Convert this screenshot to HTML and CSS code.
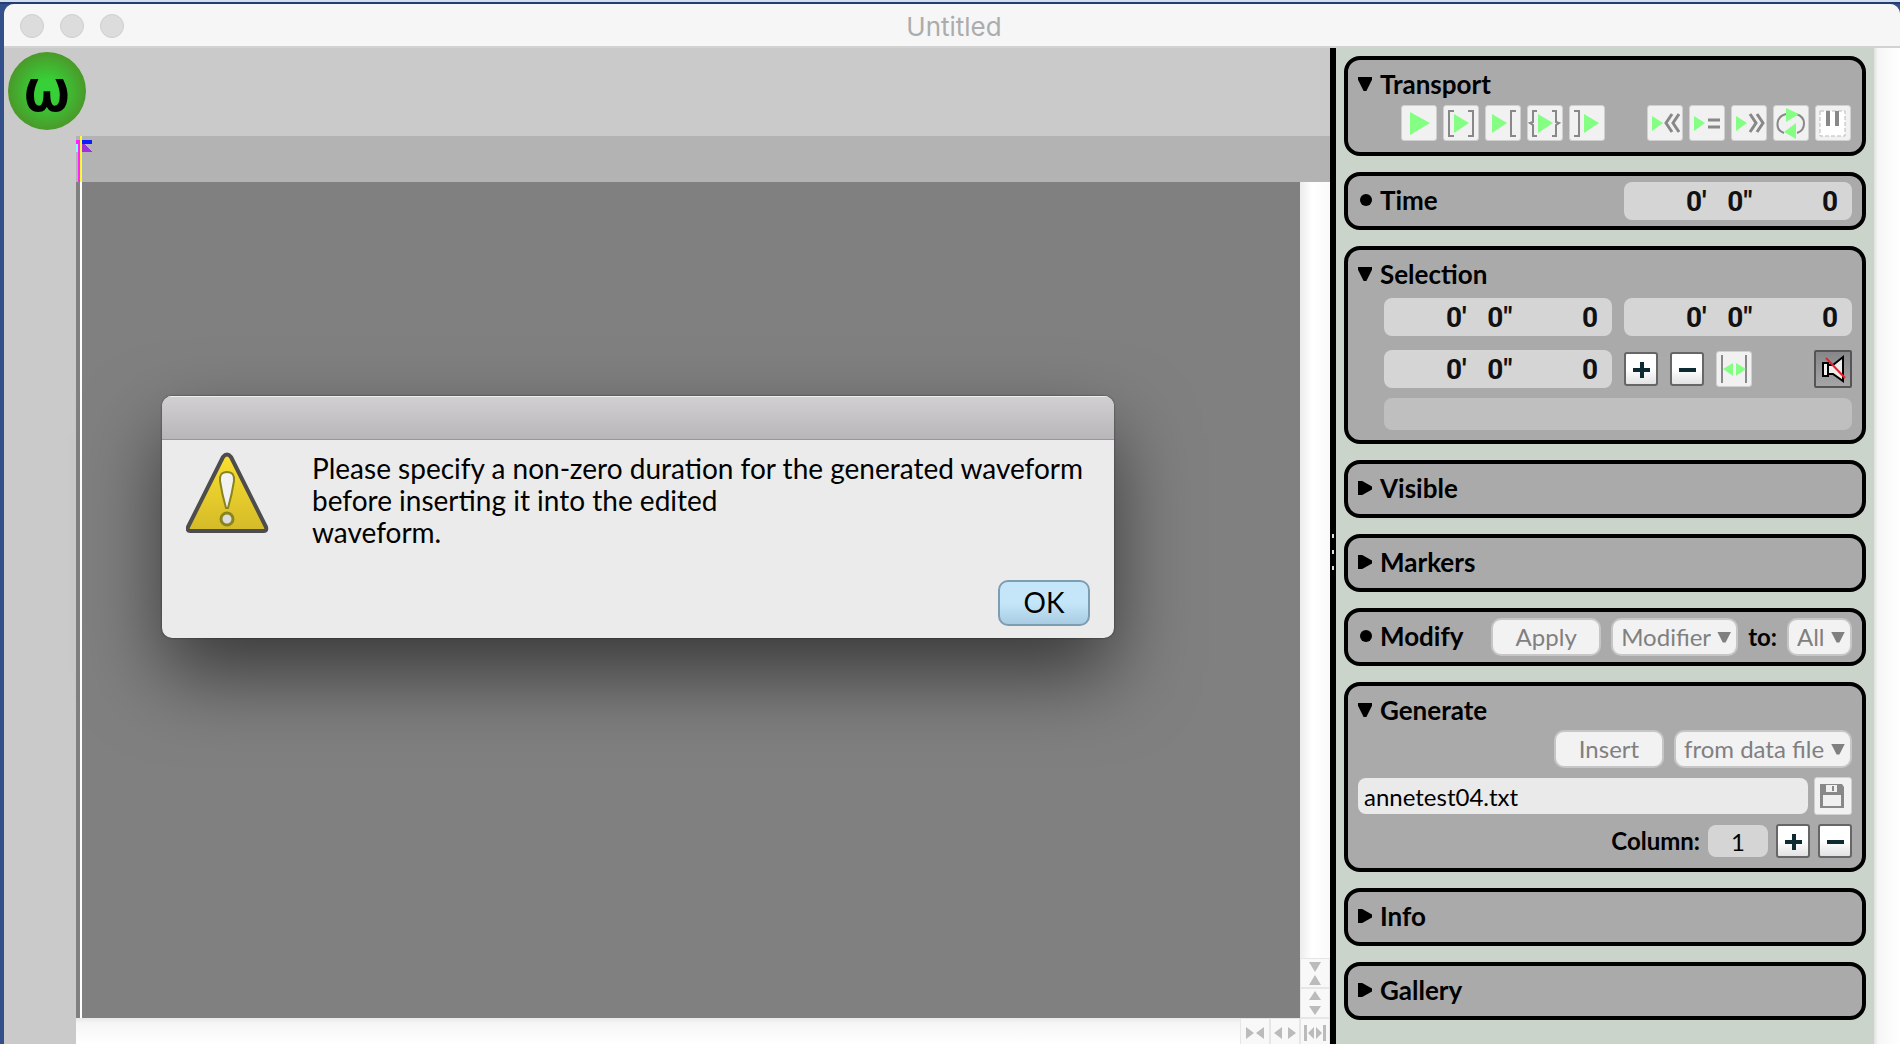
FILE: index.html
```html
<!doctype html>
<html lang="en">
<head>
    <meta charset="utf-8">
    <title>Untitled</title>
    <link rel="stylesheet" href="styles.css">
</head>
<body>
    <div class="window">
        <header class="titlebar">
            <div class="lights"><i></i><i></i><i></i></div>
            <h1>Untitled</h1>
        </header>

        <div class="content">
            <main class="editor">
                <div class="toolbar"><span class="logo">ω</span></div>

                <div class="wave-area">
                    <div class="timeline">
                        <svg class="marker" width="16" height="46" viewBox="0 0 16 46" shape-rendering="crispEdges">
                            <path fill="#ff1fff" d="M0 4h4v42H2V8H0z"/>
                            <path fill="#80ffff" d="M0 8h2v8H0z"/>
                            <path fill="#9b30dc" d="M6 6l10 10H6z"/>
                            <path fill="#0a1eff" d="M6 4h10v4H6z"/>
                            <path fill="#ffff30" d="M4 0h2v46H4z"/>
                        </svg>
                    </div>
                    <div class="wave-row">
                        <div class="canvas"></div>
                        <div class="vscroll">
                            <button aria-label="Zoom out vertically"><svg width="14" height="24" viewBox="0 0 14 24"><path d="M1 1h12L7 11zM1 24h12L7 14z"/></svg></button>
                            <button aria-label="Zoom in vertically"><svg width="14" height="24" viewBox="0 0 14 24"><path d="M1 9h12L7 0zM1 15h12L7 24z"/></svg></button>
                        </div>
                    </div>
                    <div class="hscroll">
                        <button aria-label="Zoom out"><svg width="20" height="14" viewBox="0 0 20 14"><path d="M1 1v12l8-6zM19 1v12l-8-6z"/></svg></button>
                        <button aria-label="Zoom in"><svg width="22" height="14" viewBox="0 0 22 14"><path d="M8 1v12L0 7zM14 1v12l8-6z"/></svg></button>
                        <button aria-label="Zoom to selection"><svg width="22" height="18" viewBox="0 0 22 18"><path d="M0 1h3v16H0zM22 1h-3v16h3zM10 3v12L4 9zM12 3v12l6-6z"/></svg></button>
                    </div>
                </div>
            </main>

            <div class="splitter"><i></i><i></i><i></i></div>

            <aside class="sidebar">
                <section class="panel transport">
                    <button class="title open" aria-expanded="true">Transport</button>
                    <div class="row">
                        <button class="tool" aria-label="Play" disabled><svg viewBox="0 0 36 36"><path class="g" d="M9 7l20 11L9 30z"/></svg></button>
                        <button class="tool" aria-label="Play selection" disabled><svg viewBox="0 0 36 36"><path class="g" d="M11 9l15 9-15 10z"/><path class="s" d="M11 6H6v25h5M25 6h5v25h-5"/></svg></button>
                        <button class="tool" aria-label="Play to selection" disabled><svg viewBox="0 0 36 36"><path class="g" d="M7 9l15 9L7 28z"/><path class="s" d="M31 6h-5v25h5"/></svg></button>
                        <button class="tool" aria-label="Play around selection" disabled><svg viewBox="0 0 36 36"><path class="g" d="M11 9l15 9-15 10z"/><path class="s" d="M10 6H6v11l-3 1 3 2v11h4M25 6h4v11l3 1-3 2v11h-4"/></svg></button>
                        <button class="tool" aria-label="Play after selection" disabled><svg viewBox="0 0 36 36"><path class="g" d="M15 9l15 9-15 10z"/><path class="s" d="M5 6h5v25H5"/></svg></button>
                        <span class="gap"></span>
                        <button class="tool" aria-label="Slower" disabled><svg viewBox="0 0 36 36"><path class="g" d="M5 11l11 7-11 8z"/><path class="s w" d="M25 9l-6 9 6 9M32 9l-6 9 6 9"/></svg></button>
                        <button class="tool" aria-label="Normal speed" disabled><svg viewBox="0 0 36 36"><path class="g" d="M5 11l11 7-11 8z"/><path class="s w" d="M19 15h12M19 22h12"/></svg></button>
                        <button class="tool" aria-label="Faster" disabled><svg viewBox="0 0 36 36"><path class="g" d="M5 11l11 7-11 8z"/><path class="s w" d="M19 9l6 9-6 9M26 9l6 9-6 9"/></svg></button>
                        <button class="tool" aria-label="Loop" disabled><svg viewBox="0 0 36 36"><path class="s" d="M13 9C2 12 2 25 11 28M23 9c11 3 10 16 1 19"/><path class="g" d="M13 3l13 6-13 8zM23 18v16l-12-7z"/></svg></button>
                        <button class="tool" aria-label="Keyboard" disabled><svg viewBox="0 0 36 36"><path fill="#fff" stroke="#bbb" stroke-width="1" stroke-dasharray="4 2" d="M5 6h25v25H5z"/><path fill="#888" d="M11 6h4v15h-4zM20 6h4v15h-4z"/></svg></button>
                    </div>
                </section>

                <section class="panel inline">
                    <h2 class="title dot">Time</h2>
                    <input class="time" aria-label="Time" value="0'   0&quot;          0">
                </section>

                <section class="panel selection">
                    <button class="title open" aria-expanded="true">Selection</button>
                    <div class="fields">
                        <input class="time" aria-label="Selection start" value="0'   0&quot;          0">
                        <input class="time" aria-label="Selection end" value="0'   0&quot;          0">
                        <input class="time" aria-label="Selection length" value="0'   0&quot;          0">
                        <div class="row">
                            <button class="step" aria-label="Increase"><svg viewBox="0 0 34 34"><path d="M9 18h17M18 10v16"/></svg></button>
                            <button class="step" aria-label="Decrease"><svg viewBox="0 0 34 34"><path d="M9 18h17"/></svg></button>
                            <button class="tool" aria-label="Fit selection" disabled><svg viewBox="0 0 36 36"><path class="s" d="M6 4v28M30 4v28"/><path class="g" d="M17 12v13L7 18zM20 12v13l10-7z"/></svg></button>
                            <button class="mute" aria-label="Mute"><svg viewBox="0 0 38 38"><path fill="#eee" stroke="#000" stroke-width="2" d="M9 13h5v13H9zM14 15h5L29 7v24L19 24h-5z"/><path stroke="#e8202a" stroke-width="2" d="M12 8l19 20"/></svg></button>
                        </div>
                        <output class="bar"></output>
                    </div>
                </section>

                <section class="panel"><button class="title" aria-expanded="false">Visible</button></section>
                <section class="panel"><button class="title" aria-expanded="false">Markers</button></section>

                <section class="panel inline">
                    <h2 class="title dot">Modify</h2>
                    <button class="push" disabled>Apply</button>
                    <span class="pick"><select aria-label="Modifier" disabled><option>Modifier</option></select></span>
                    <label for="modify-to">to:</label>
                    <span class="pick"><select id="modify-to" disabled><option>All</option></select></span>
                </section>

                <section class="panel generate">
                    <button class="title open" aria-expanded="true">Generate</button>
                    <div class="row">
                        <button class="push" disabled>Insert</button>
                        <span class="pick"><select aria-label="Source" disabled><option>from data file</option></select></span>
                    </div>
                    <div class="row file">
                        <input class="name" aria-label="Data file" value="annetest04.txt">
                        <button class="tool save" aria-label="Save" disabled><svg viewBox="0 0 38 38"><path fill="#888" d="M6 7h22l2 3v21H6z"/><path fill="#f0f0f0" d="M12 8h11v7H12zM9 18h18v11H9z"/><path fill="#888" d="M18 9h2v5h-2z"/></svg></button>
                    </div>
                    <div class="row column">
                        <label for="column">Column:</label>
                        <input id="column" value="1">
                        <button class="step" aria-label="Next column"><svg viewBox="0 0 34 34"><path d="M9 18h17M18 10v16"/></svg></button>
                        <button class="step" aria-label="Previous column"><svg viewBox="0 0 34 34"><path d="M9 18h17"/></svg></button>
                    </div>
                </section>

                <section class="panel"><button class="title" aria-expanded="false">Info</button></section>
                <section class="panel"><button class="title" aria-expanded="false">Gallery</button></section>
            </aside>
            <div class="page-scroll"></div>
        </div>
    </div>

    <div class="dialog" role="alertdialog" aria-labelledby="message">
        <div class="dialog-bar"></div>
        <div class="dialog-body">
            <svg class="warning" width="84" height="82" viewBox="0 0 84 82">
                <defs>
                    <linearGradient id="yellow" x1="0" y1="0" x2="0" y2="1">
                        <stop offset="0" stop-color="#fae030"/>
                        <stop offset="1" stop-color="#d4ba28"/>
                    </linearGradient>
                </defs>
                <path fill="url(#yellow)" stroke="#4d4d4d" stroke-width="4" stroke-linejoin="round" d="M37 5q4-5 8 0l35 70q1 4-2 4H4q-3 0-2-4z"/>
                <path fill="#f2f2f2" stroke="#8a8420" stroke-width="2" d="M41 20q8 0 7 9-2 13-6 27h-2q-4-14-6-27-1-9 7-9z"/>
                <circle cx="41" cy="67" r="6" fill="#ddd" stroke="#8a8420" stroke-width="3"/>
            </svg>
            <p id="message">Please specify a non-zero duration for the generated waveform<br>before inserting it into the edited<br>waveform.</p>
        </div>
        <div class="dialog-actions"><button class="ok">OK</button></div>
    </div>
</body>
</html>
```

FILE: styles.css
```css
* {
    box-sizing: border-box;
}

body {
    margin: 0;
    height: 100vh;
    overflow: hidden;
    padding: 4px 0 0 4px;
    background: #34508a;
    box-shadow: inset 0 2px #d3ddf2, inset 0 4px #243d70;
    font-family: Lato, "Liberation Sans", sans-serif;
    font-size: 24px;
    color: #000;
}

button,
input,
select {
    margin: 0;
    padding: 0;
    border: 0;
    font: inherit;
    color: inherit;
}

button svg {
    display: block;
}

.window {
    height: 100%;
    display: flex;
    flex-direction: column;
    border-radius: 10px 10px 0 0;
    overflow: hidden;
    background: #cacaca;
}

/* title bar */
.titlebar {
    position: relative;
    flex: none;
    height: 44px;
    padding: 2px 0 0 4px;
    display: flex;
    align-items: center;
    background: #f6f6f6;
    border-bottom: 2px solid #d2d2d2;
}

.titlebar h1 {
    flex: 1;
    margin: 0;
    text-align: center;
    font: 26px Inter, "Liberation Sans", sans-serif;
    color: #acacac;
}

.lights {
    position: absolute;
    left: 16px;
    display: flex;
    gap: 16px;
}

.lights i {
    width: 24px;
    height: 24px;
    border-radius: 50%;
    border: 1px solid #cdcdcd;
    background: #dcdcdc;
}

.content {
    flex: 1;
    min-height: 0;
    display: flex;
}

/* waveform editor */
.editor {
    flex: 1;
    display: flex;
    flex-direction: column;
}

.toolbar {
    height: 88px;
    padding: 4px;
}

.logo {
    width: 78px;
    height: 78px;
    display: flex;
    align-items: center;
    justify-content: center;
    border-radius: 50%;
    background: radial-gradient(circle, #38d038 20%, #4a9a2a 70%);
    font: 56px/78px "DejaVu Sans", sans-serif;
    -webkit-text-stroke: 2px #000;
}

.wave-area {
    flex: 1;
    margin-left: 72px;
    display: flex;
    flex-direction: column;
}

.timeline {
    height: 46px;
    background: #b3b3b3;
}

.marker {
    display: block;
}

.wave-row {
    flex: 1;
    display: flex;
}

.canvas {
    flex: 1;
    background: linear-gradient(#fff, #fff) 4px 0 / 2px 100% no-repeat #808080;
}

.vscroll {
    width: 30px;
    display: flex;
    flex-direction: column;
    justify-content: flex-end;
    background: linear-gradient(to right, #ececec, #fff 40%, #fafafa);
}

.hscroll {
    height: 26px;
    display: flex;
    justify-content: flex-end;
    background: linear-gradient(#e8e8e8, #f6f6f6 20%, #fff);
}

.vscroll button,
.hscroll button {
    width: 30px;
    height: 30px;
    display: flex;
    align-items: center;
    justify-content: center;
    border: 1px solid #e6e6e6;
    background: #f8f8f8;
    fill: #bbb;
}

.splitter {
    width: 6px;
    display: flex;
    flex-direction: column;
    align-items: center;
    justify-content: center;
    gap: 12px;
    padding-top: 12px;
    background: #000;
}

.splitter i {
    width: 2px;
    height: 4px;
    background: #ddd;
}

/* sidebar */
.sidebar {
    width: 538px;
    padding: 8px;
    display: flex;
    flex-direction: column;
    gap: 16px;
    background: #cad4ca;
}

.page-scroll {
    width: 26px;
    background: linear-gradient(to right, #e0e0e0, #f6f6f6 15%, #fff);
}

.panel {
    flex: none;
    padding: 6px 10px;
    border: 4px solid #000;
    border-radius: 16px;
    background: #aaa;
}

.panel label {
    padding-bottom: 2px;
    font-weight: bold;
}

.inline,
.row {
    display: flex;
    align-items: center;
    gap: 10px;
}

.row {
    justify-content: flex-end;
}

.title {
    display: flex;
    align-items: center;
    gap: 8px;
    height: 38px;
    margin: 0;
    padding-bottom: 2px;
    background: none;
    font-size: 26px;
    font-weight: bold;
}

.inline .title {
    margin-right: auto;
}

.title::before {
    content: "";
    width: 14px;
    height: 14px;
    background: #000;
    clip-path: polygon(0 0, 30% 0, 100% 40%, 100% 60%, 30% 100%, 0 100%);
}

.title.open::before {
    clip-path: polygon(0 0, 100% 0, 100% 20%, 60% 100%, 40% 100%, 0 20%);
}

.title.dot::before {
    width: 12px;
    height: 12px;
    margin: 0 0 0 2px;
    clip-path: circle(50%);
}

.transport {
    padding-bottom: 11px;
}

.transport .row {
    gap: 6px;
    padding: 1px 1px 0 0;
}

.gap {
    width: 30px;
}

.tool {
    width: 36px;
    height: 36px;
    border: 1px solid #d0d0d0;
    border-radius: 3px;
    background: #f1f1f1;
}

.g {
    fill: #84ff84;
}

.s {
    fill: none;
    stroke: #888;
    stroke-width: 2;
}

.w {
    stroke-width: 3;
}

.time {
    width: 228px;
    height: 38px;
    padding-right: 14px;
    border-radius: 8px;
    background: #d5d5d5;
    font: bold 28px Roboto, sans-serif;
    color: #111;
    text-align: right;
}

.selection,
.generate {
    padding-bottom: 10px;
}

.fields {
    display: grid;
    grid-template-columns: 1fr 1fr;
    gap: 14px 12px;
    padding: 4px 0 0 26px;
}

.fields .time {
    width: 100%;
}

.fields .row {
    justify-content: flex-start;
    gap: 12px;
}

.step {
    width: 34px;
    height: 34px;
    border: 2px solid #666;
    border-radius: 3px;
    background: linear-gradient(#fff 50%, #e2e2e4);
}

.step svg {
    margin: -2px;
    width: 34px;
    height: 34px;
    stroke: #0d2a33;
    stroke-width: 4;
}

.tool svg {
    margin: -1px;
    width: 36px;
    height: 36px;
}

.mute {
    width: 38px;
    height: 38px;
    margin-left: auto;
    border: 2px solid #555;
    border-radius: 2px;
    background: linear-gradient(#87878a, #a5a5a8);
}

.mute svg {
    margin: -2px;
    width: 38px;
    height: 38px;
}

.bar {
    grid-column: 1 / -1;
    height: 32px;
    margin-top: -4px;
    border-radius: 8px;
    background: #bfbfbf;
}

.push,
.pick {
    height: 38px;
    border: 2px solid #c6c6c6;
    border-radius: 10px;
    background: #f2f2f2;
    color: #808080;
}

.push {
    width: 110px;
    padding-bottom: 2px;
}

.pick {
    display: flex;
    align-items: center;
    gap: 6px;
    padding: 0 5px 0 8px;
}

.pick select {
    appearance: none;
    padding-bottom: 2px;
    background: none;
    opacity: 1;
}

.pick::after {
    content: "";
    width: 14px;
    height: 11px;
    background: #808080;
    clip-path: polygon(0 0, 100% 0, 60% 100%, 40% 100%);
}

.generate .file {
    gap: 6px;
    margin-top: 9px;
}

.name {
    flex: 1;
    height: 36px;
    padding: 0 6px;
    border-radius: 8px;
    background: #eaeaea;
}

.save,
.save svg {
    width: 38px;
    height: 38px;
}

.generate .column {
    gap: 8px;
    margin-top: 9px;
}

#column {
    width: 60px;
    height: 32px;
    border-radius: 8px;
    background: #d5d5d5;
    text-align: center;
}

/* alert */
.dialog {
    position: absolute;
    left: 162px;
    top: 396px;
    width: 952px;
    border-radius: 10px;
    overflow: hidden;
    background: #ebebeb;
    box-shadow: 0 0 2px rgba(0, 0, 0, 0.6), 0 36px 80px rgba(0, 0, 0, 0.56);
}

.dialog-bar {
    height: 44px;
    border-bottom: 1px solid #989698;
    background: linear-gradient(#d2d0d3, #b9b6ba);
    box-shadow: inset 0 1px #eee;
}

.dialog-body {
    display: flex;
    gap: 42px;
    padding: 12px 24px 0;
}

.dialog p {
    margin: 0;
    font-size: 28px;
    line-height: 32px;
    white-space: nowrap;
}

.dialog-actions {
    display: flex;
    justify-content: flex-end;
    padding: 32px 24px 12px;
}

.dialog-body .warning {
    margin-bottom: 14px;
}

.ok {
    width: 92px;
    height: 46px;
    padding-bottom: 2px;
    border: 2px solid #7d9db3;
    border-radius: 10px;
    background: linear-gradient(#c5e6f9 50%, #a9cce2);
    font-size: 28px;
}
```
